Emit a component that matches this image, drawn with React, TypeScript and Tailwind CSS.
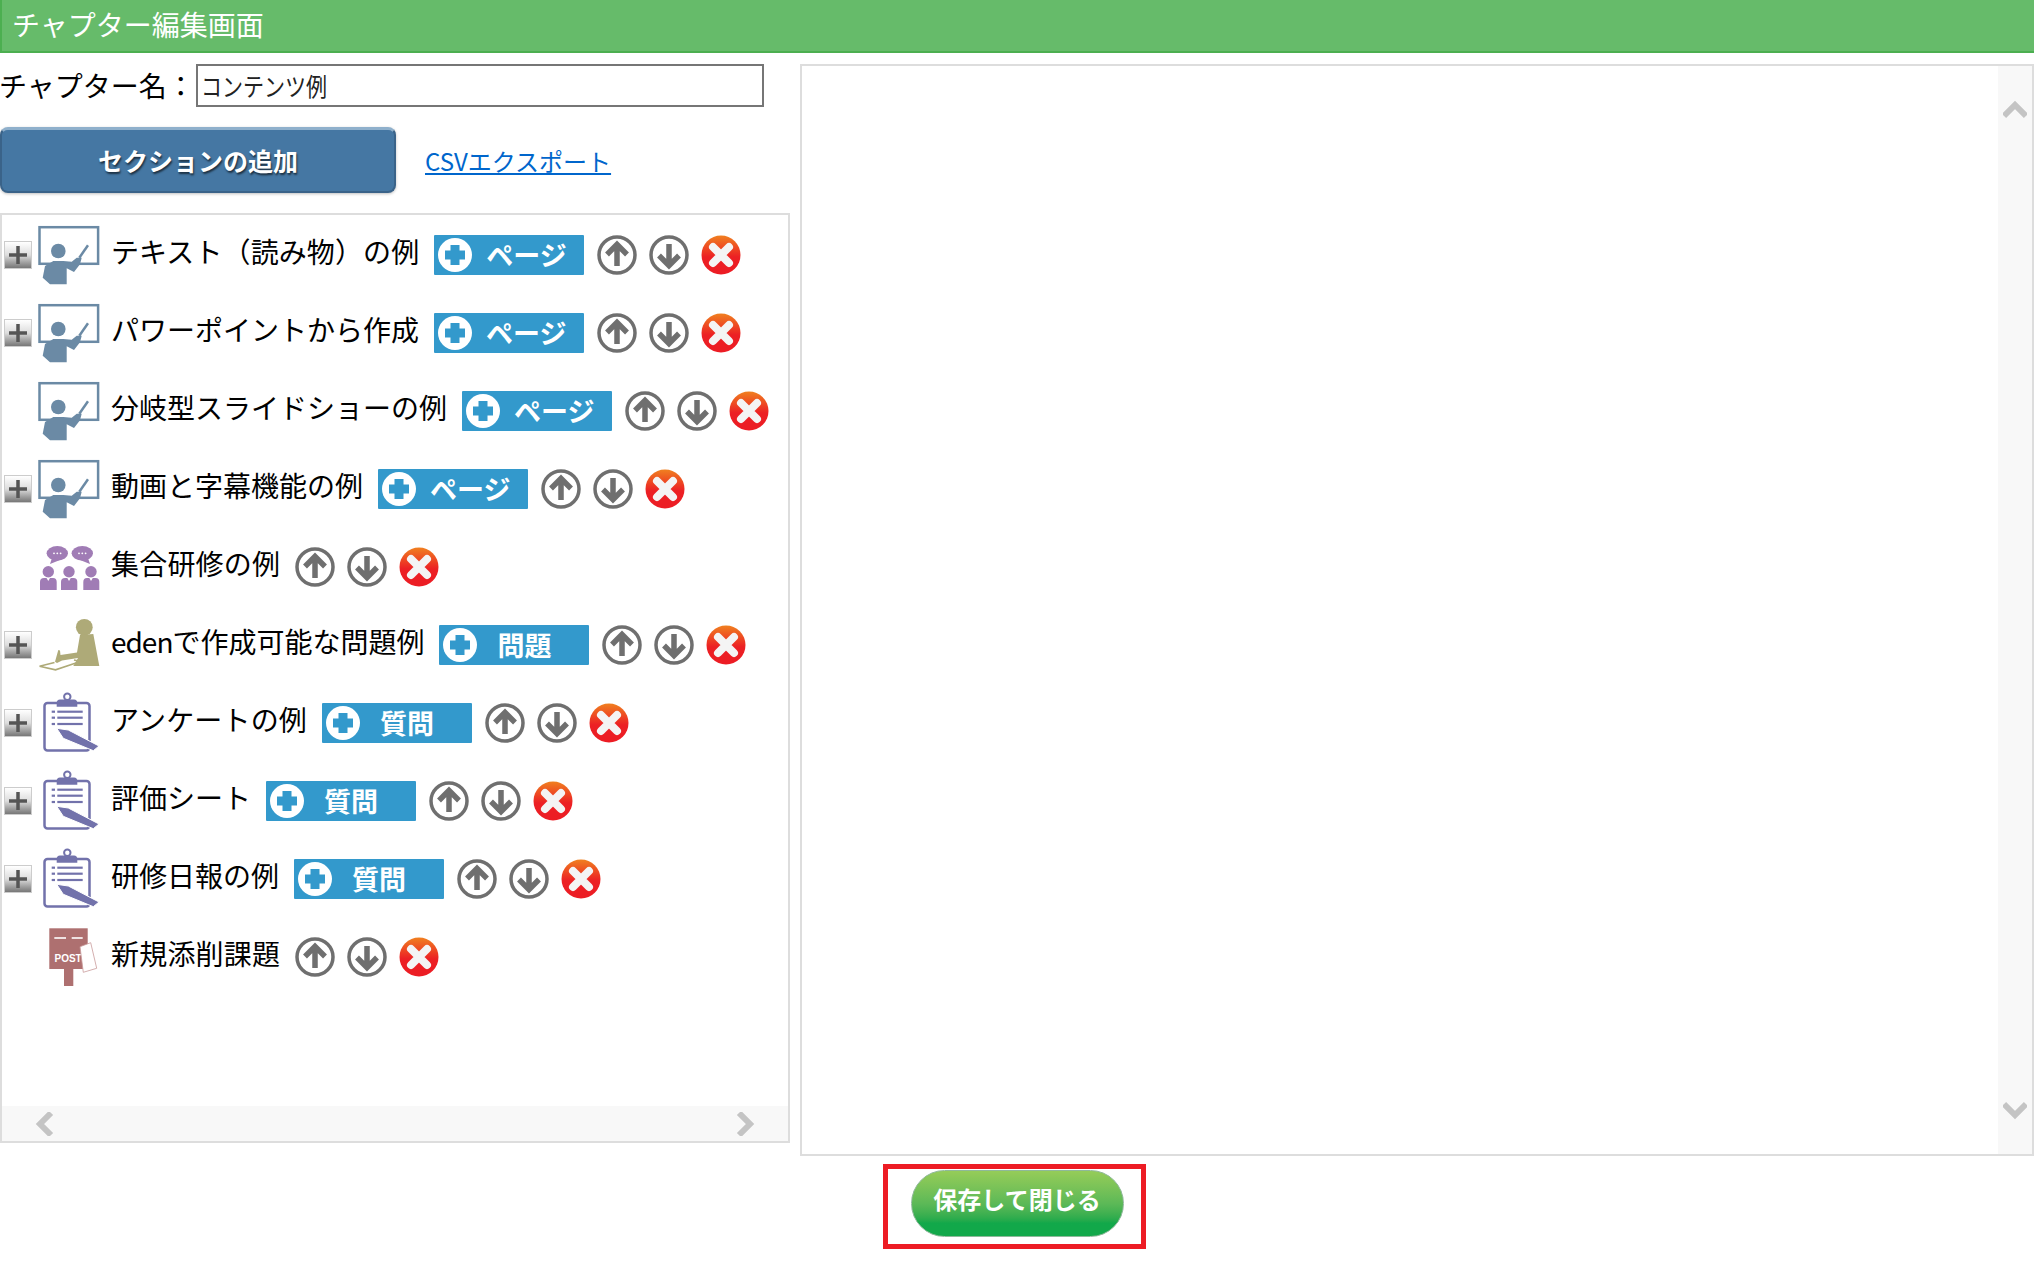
import React from 'react';

type Kind = 'teacher' | 'group' | 'eden' | 'clipboard' | 'post';

const rows: { name: React.ReactNode; id: string; kind: Kind; plus: boolean; add?: string }[] = [
  { id: 'text', name: <span className="tracking-[0.1px]">テキスト（読み物）の例</span>, kind: 'teacher', plus: true, add: 'ページ' },
  { id: 'ppt', name: 'パワーポイントから作成', kind: 'teacher', plus: true, add: 'ページ' },
  { id: 'branch', name: '分岐型スライドショーの例', kind: 'teacher', plus: false, add: 'ページ' },
  { id: 'video', name: '動画と字幕機能の例', kind: 'teacher', plus: true, add: 'ページ' },
  { id: 'group', name: <span className="tracking-[0.2px]">集合研修の例</span>, kind: 'group', plus: false },
  { id: 'eden', name: <><span className="tracking-[-1px]">eden</span>で作成可能な問題例</>, kind: 'eden', plus: true, add: '問題' },
  { id: 'survey', name: <span className="tracking-[0.15px]">アンケートの例</span>, kind: 'clipboard', plus: true, add: '質問' },
  { id: 'sheet', name: '評価シート', kind: 'clipboard', plus: true, add: '質問' },
  { id: 'daily', name: '研修日報の例', kind: 'clipboard', plus: true, add: '質問' },
  { id: 'post', name: <span className="tracking-[0.2px]">新規添削課題</span>, kind: 'post', plus: false },
];

const TypeIcon = ({ kind }: { kind: Kind }) => {
  if (kind === 'teacher') {
    return (
      <svg width="64" height="64" viewBox="0 0 64 64">
        <rect x="2.5" y="4.2" width="58.6" height="36.6" fill="none" stroke="#6b8aa5" strokeWidth="2.5" />
        <circle cx="21.3" cy="28" r="7.3" fill="#6b8aa5" />
        <path d="M5.7 54.7 L8 43 L16.3 38 L26.3 38 L34.7 38.7 L39.7 34.7 L44.7 34.7 L43 41.3 L37 49 L29.7 45.3 L29.7 61.3 L13 61.3 Z" fill="#6b8aa5" />
        <line x1="42.3" y1="34.7" x2="51" y2="22.3" stroke="#6b8aa5" strokeWidth="2.5" />
      </svg>
    );
  }
  if (kind === 'group') {
    return (
      <svg width="64" height="64" viewBox="0 0 64 64">
        <g fill="#a07cb5">
          <ellipse cx="20.3" cy="18.3" rx="10.7" ry="7.3" />
          <ellipse cx="45.3" cy="18.3" rx="10.7" ry="7.3" />
          <path d="M15 23 L13 29 L23 25 Z" />
          <path d="M43 25 L53 29 L51 23 Z" />
          <circle cx="11.3" cy="36.7" r="5.7" />
          <circle cx="32" cy="36.7" r="5.7" />
          <circle cx="54" cy="36.7" r="5.7" />
          <path d="M3 55 L3 47 Q3 43 7 43 L16 43 Q19.7 43 19.7 47 L19.7 55 Z" />
          <path d="M24 55 L24 47 Q24 43 28 43 L36.5 43 Q40.3 43 40.3 47 L40.3 55 Z" />
          <path d="M46.3 55 L46.3 47 Q46.3 43 50 43 L58.5 43 Q62.3 43 62.3 47 L62.3 55 Z" />
        </g>
        <g fill="#ffffff">
          <circle cx="17" cy="18.3" r="0.9" />
          <circle cx="20.3" cy="18.3" r="0.9" />
          <circle cx="23.6" cy="18.3" r="0.9" />
          <circle cx="42" cy="18.3" r="0.9" />
          <circle cx="45.3" cy="18.3" r="0.9" />
          <circle cx="48.6" cy="18.3" r="0.9" />
          <path d="M9.5 43 L11.3 46 L13 43 Z" />
          <path d="M30.3 43 L32 46 L33.8 43 Z" />
          <path d="M52.3 43 L54 46 L55.8 43 Z" />
        </g>
      </svg>
    );
  }
  if (kind === 'eden') {
    return (
      <svg width="64" height="64" viewBox="0 0 64 64">
        <g fill="#aeaa78">
          <circle cx="47.3" cy="14.3" r="8.4" />
          <path d="M43 22 L56.3 21 L62.3 53 L36.3 53 L41 45 L25 47.5 L20 50 L18 48.7 L21.3 37 L23 37.5 L23.5 42 L40 39.5 Z" />
        </g>
        <path d="M2.5 53.2 L17.5 49.5 M2.5 53.2 L18.5 56.8 L43.5 48.5 L37 47" fill="none" stroke="#aeaa78" strokeWidth="1.6" />
      </svg>
    );
  }
  if (kind === 'clipboard') {
    return (
      <svg width="64" height="64" viewBox="0 0 64 64">
        <rect x="7.5" y="11.9" width="45" height="47.6" rx="3" fill="none" stroke="#7272ab" strokeWidth="2.5" />
        <circle cx="30.3" cy="5.7" r="3.2" fill="none" stroke="#7272ab" strokeWidth="2" />
        <path d="M19.7 15.7 L19.7 12 Q19.7 8.5 23 8.5 L37 8.5 Q40.3 8.5 40.3 12 L40.3 15.7 Z" fill="#7272ab" />
        <g stroke="#7272ab" strokeWidth="2.2">
          <line x1="14.7" y1="20.7" x2="18" y2="20.7" />
          <line x1="20.3" y1="20.7" x2="45.7" y2="20.7" />
          <line x1="14.7" y1="26.7" x2="18" y2="26.7" />
          <line x1="20.3" y1="26.7" x2="45.7" y2="26.7" />
          <line x1="14.7" y1="33" x2="18" y2="33" />
          <line x1="20.3" y1="33" x2="45.7" y2="33" />
        </g>
        <path d="M19.7 37.3 L31.3 39 L62 55 L56.3 59.7 L26.3 47.3 Z" fill="#7272ab" stroke="#ffffff" strokeWidth="1" />
      </svg>
    );
  }
  return (
    <svg width="64" height="64" viewBox="0 0 64 64">
      <rect x="12.3" y="3.3" width="38.4" height="40.7" fill="#ae7070" />
      <rect x="27" y="44" width="9.3" height="17" fill="#ae7070" />
      <line x1="17.3" y1="13" x2="29" y2="13" stroke="#ffffff" strokeWidth="1.6" />
      <line x1="34.7" y1="13" x2="45.7" y2="13" stroke="#ffffff" strokeWidth="1.6" />
      <text x="17.5" y="37" fill="#ffffff" fontSize="10" fontWeight="700" fontFamily="'Liberation Sans', sans-serif">POST</text>
      <path d="M43 21.7 L53.7 17.7 L59.7 43.3 L46.3 47.3 Z" fill="#ffffff" stroke="#c99a9a" strokeWidth="0.8" />
    </svg>
  );
};

const Expander = () => (
  <div className="ml-[2px] flex h-[28px] w-[28px] items-center justify-center border border-[#cccccc] bg-gradient-to-b from-[#ffffff] via-[#dddddd] to-[#777777]">
    <svg width="20" height="20" viewBox="0 0 20 20">
      <path d="M10 1 V19 M1 10 H19" stroke="#555555" strokeWidth="3.5" />
    </svg>
  </div>
);

const AddButton = ({ label }: { label: string }) => (
  <div className="flex h-[40px] w-[150px] items-center rounded-[1px] bg-[#3399cc] pl-[3px]">
    <svg width="36" height="36" viewBox="0 0 36 36" className="shrink-0">
      <circle cx="18" cy="18" r="17" fill="#ffffff" />
      <path d="M18 8 V28 M8 18 H28" stroke="#3399cc" strokeWidth="9" />
    </svg>
    <span className={label === 'ページ' ? 'ml-[13px] -translate-y-[1px] text-[27px] leading-none font-bold text-white' : 'ml-[19px] -translate-y-[1px] text-[27px] leading-none font-bold text-white'}>{label}</span>
  </div>
);

const MoveButton = ({ dir }: { dir: 'up' | 'down' }) => (
  <svg width="40" height="40" viewBox="0 0 40 40" className="shrink-0">
    <circle cx="20" cy="20" r="18" fill="#ffffff" stroke="#6f6f6f" strokeWidth="3.5" />
    <path
      d={dir === 'up' ? 'M20 31 V10 M10 19.5 L20 9.5 L30 19.5' : 'M20 9 V30 M10 20.5 L20 30.5 L30 20.5'}
      fill="none"
      stroke="#6f6f6f"
      strokeWidth="5.5"
    />
  </svg>
);

const DeleteButton = () => (
  <svg width="40" height="40" viewBox="0 0 40 40" className="shrink-0">
    <defs>
      <linearGradient id="del" x1="0" y1="0" x2="0" y2="1">
        <stop offset="0" stopColor="#f08020" />
        <stop offset="0.55" stopColor="#ec2024" />
        <stop offset="1" stopColor="#ec1c24" />
      </linearGradient>
    </defs>
    <circle cx="20" cy="20" r="19.5" fill="url(#del)" />
    <path d="M12 12 L28 28 M28 12 L12 28" stroke="#f4f4f4" strokeWidth="8" strokeLinecap="round" />
  </svg>
);

const ChapterRow = ({ name, kind, plus, add }: { name: React.ReactNode; kind: Kind; plus: boolean; add?: string }) => (
  <div className="flex h-[78px] items-center whitespace-nowrap">
    <div className="w-[35px] shrink-0">{plus && <Expander />}</div>
    <TypeIcon kind={kind} />
    <span className="mr-[15px] ml-[10px] -translate-y-[4px] text-[28px] leading-none text-black">{name}</span>
    {add && <div className="mr-[13px]"><AddButton label={add} /></div>}
    <div className="flex gap-[12px]">
      <MoveButton dir="up" />
      <MoveButton dir="down" />
      <DeleteButton />
    </div>
  </div>
);

const Chevron = ({ d, w, h }: { d: string; w: number; h: number }) => (
  <svg width={w} height={h} viewBox={`0 0 ${w} ${h}`}>
    <path d={d} fill="none" stroke="#c4c4c4" strokeWidth="6" />
  </svg>
);

export default function App() {
  return (
    <div className="min-h-[1280px] bg-white font-['Noto_Sans_CJK_JP','Noto_Sans',sans-serif]">
      {/* Header */}
      <div className="flex h-[53px] items-center border-b-2 border-l-2 border-[#4caf50] bg-[#66bb6a] pl-[10px]">
        <span className="-translate-y-[2px] text-[28px] leading-none text-white">チャプター編集画面</span>
      </div>

      <div className="mt-[11px] flex">
        {/* Left column */}
        <div className="w-[790px] shrink-0">
          <div className="flex h-[43px] items-center">
            <span className="w-[196px] -translate-x-[1px] -translate-y-[1px] text-[28px] leading-none text-black">チャプター名：</span>
            <div className="flex h-[43px] w-[568px] items-center border-2 border-[#767676] pl-[3px] text-[21px] leading-none text-[#222222]">
              <span className="inline-block scale-y-[1.2]">コンテンツ例</span>
            </div>
          </div>
          <div className="mt-[20px] flex h-[66px] items-center">
            <div className="flex h-[66px] w-[396px] items-center justify-center rounded-[8px] border-2 border-t-[3px] border-[#3a6389] border-t-[#8fb0cc] bg-[#4577a3] text-[25px] leading-none font-bold text-white shadow-[0_1px_3px_rgba(0,0,0,0.25)] [text-shadow:1px_2px_2px_rgba(0,0,0,0.6)]">
              セクションの追加
            </div>
            <a className="mt-[2px] ml-[29px] text-[24px] leading-none text-[#0066cc] underline">CSVエクスポート</a>
          </div>
          <div className="mt-[20px] flex h-[930px] flex-col border-2 border-[#dddddd]">
            <div className="flex-1 pt-[1px]">
              {rows.map((r) => (
                <ChapterRow key={r.id} name={r.name} kind={r.kind} plus={r.plus} add={r.add} />
              ))}
            </div>
            <div className="flex h-[35px] items-center justify-between bg-[#f8f8f8] pr-[32px] pl-[32px]">
              <Chevron w={20} h={24} d="M17 1 L6 12 L17 23" />
              <Chevron w={20} h={24} d="M3 1 L14 12 L3 23" />
            </div>
          </div>
        </div>

        {/* Right panel */}
        <div className="ml-[10px] flex h-[1092px] flex-1 border-2 border-[#dddddd]">
          <div className="flex-1" />
          <div className="flex w-[34px] flex-col items-center justify-between bg-[#f8f8f8] pt-[33px] pb-[33px]">
            <Chevron w={24} h={20} d="M1 17 L12 6 L23 17" />
            <Chevron w={24} h={20} d="M1 3 L12 14 L23 3" />
          </div>
        </div>
      </div>

      {/* Save */}
      <div className="mt-[14px] flex justify-center">
        <div className="relative">
          <div className="flex h-[67px] w-[213px] items-center justify-center rounded-full border border-[#8fb89a] bg-gradient-to-b from-[#95cc58] via-[#5cb957] via-50% to-[#12a84a] to-80% text-[24px] leading-none font-bold text-white">
            <span className="-translate-y-[5px]">保存して閉じる</span>
          </div>
          <div className="absolute -top-[6px] -left-[28px] h-[85px] w-[263px] border-[5px] border-[#ed1c24]" />
        </div>
      </div>
    </div>
  );
}
